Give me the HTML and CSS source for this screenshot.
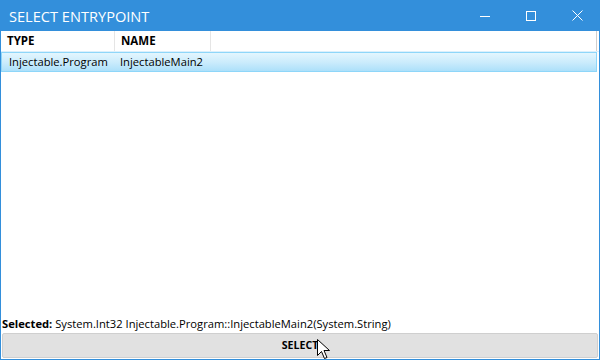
FILE: index.html
```html
<!DOCTYPE html>
<html>
<head>
<title>Select Entrypoint</title>
<link rel="stylesheet" href="styles.css">
</head>
<body>
<div class="window">
  <div class="titlebar">
    <span class="title">SELECT ENTRYPOINT</span>
    <div class="controls">
      <span class="ctl"><svg width="10" height="10" viewBox="0 0 10 10"><line x1="0" y1="5.5" x2="10" y2="5.5" stroke="#fff" stroke-width="1"/></svg></span>
      <span class="ctl"><svg width="10" height="10" viewBox="0 0 10 10"><rect x="0.5" y="0.5" width="9" height="9" fill="none" stroke="#fff" stroke-width="1"/></svg></span>
      <span class="ctl"><svg width="11" height="11" viewBox="0 0 11 11"><path d="M0.5 0.5 L10.5 10.5 M10.5 0.5 L0.5 10.5" stroke="#fff" stroke-width="1"/></svg></span>
    </div>
  </div>

  <div class="list">
    <div class="head">
      <div class="col c1">TYPE</div>
      <div class="col c2">NAME</div>
      <div class="col c3"></div>
    </div>
    <div class="row selected">
      <div class="cell c1">Injectable.Program</div>
      <div class="cell c2">InjectableMain2</div>
    </div>
  </div>

  <div class="status"><b>Selected:</b> System.Int32 Injectable.Program::InjectableMain2(System.String)</div>
  <div class="button">SELECT
    <svg class="cursor" width="14" height="21" viewBox="0 0 14 21"><path d="M0.5 0.5 L0.5 16.5 L4.5 12.5 L7.5 19.5 L10 18.5 L7 11.5 L12.5 11.5 Z" fill="#fff" stroke="#000" stroke-width="1" stroke-linejoin="miter"/></svg>
  </div>
</div>
</body>
</html>
```

FILE: styles.css
```css
body {
    margin: 0px;
    padding: 0px;
    font-family: "Open Sans", "Noto Sans", sans-serif;
    font-size: 11.2px;
    color: #000;
}

.window {
    width: 600px;
    height: 360px;
    box-sizing: border-box;
    border: 1px solid #338fdb;
    border-top: 0;
    display: flex;
    flex-direction: column;
    background: #fff;
}

.titlebar {
    height: 31px;
    background: #338fdb;
    display: flex;
    align-items: center;
    justify-content: space-between;
    margin: 0 -1px;
}
.title {
    color: #fff;
    font-size: 14.6px;
    padding-left: 9px;
    padding-top: 1px;
}
.controls {
    display: flex;
    height: 31px;
}
.ctl {
    width: 46px;
    display: flex;
    align-items: center;
    justify-content: center;
}

.list {
    flex: 1;
}
.head {
    display: flex;
    height: 20px;
    border-bottom: 1px solid #dcf0fc;
}
.col {
    font-weight: bold;
    font-size: 11.5px;
    line-height: 20px;
    padding-left: 6px;
    border-right: 1px solid #e5e5e5;
    box-sizing: border-box;
}
.c1 { width: 114px; }
.c2 { width: 96px; }
.c3 { flex: 1; margin-right: 2px; border-right-color: #cfcfcf; }

.row {
    display: flex;
    height: 20px;
    box-sizing: border-box;
    margin-right: 2px;
}
.row.selected {
    border: 1px solid #8ed6f9;
    background: linear-gradient(#e3f6fe, #ccecfc 50%, #ade0fa);
}
.cell {
    line-height: 18px;
    padding-left: 7px;
    box-sizing: border-box;
}
.cell.c2 { padding-left: 4px; }

.status {
    padding-left: 1px;
    line-height: 16px;
    margin-bottom: 1px;
}

.button {
    position: relative;
    height: 25px;
    margin: 0 1px 1px 1px;
    background: #e1e1e1;
    border: 1px solid #cfcfcf;
    border-radius: 2px;
    box-sizing: border-box;
    text-align: center;
    font-weight: bold;
    font-size: 10.6px;
    line-height: 23px;
}
.cursor {
    position: absolute;
    left: 314px;
    top: 5px;
}
```
